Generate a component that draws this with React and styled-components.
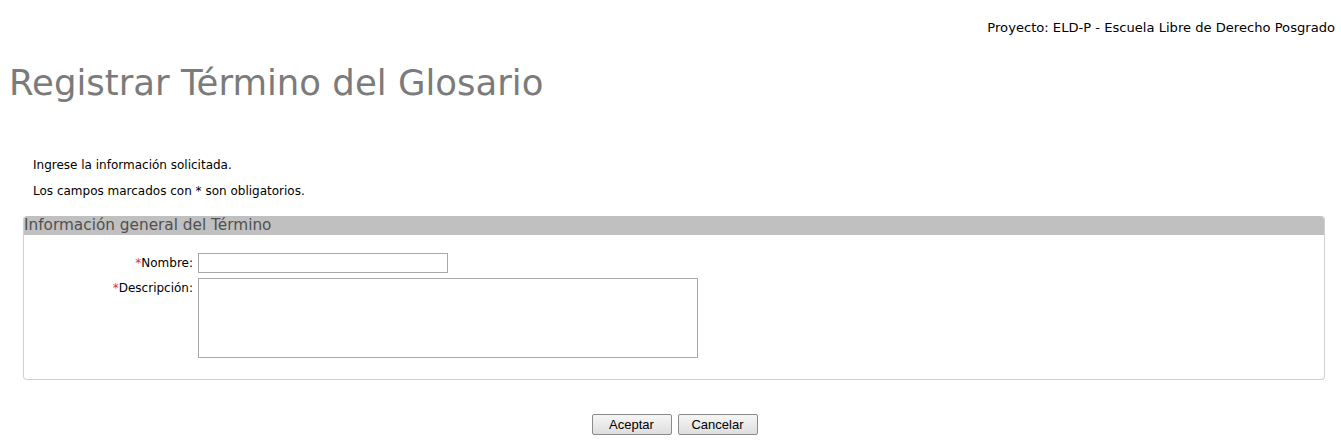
import styled, { createGlobalStyle } from "styled-components";

const GlobalStyle = createGlobalStyle`
  body {
    margin: 0;
    background: #fff;
    font-family: "DejaVu Sans", Verdana, sans-serif;
    color: #000;
  }
`;

const Page = styled.div`
  width: 1341px;
  min-height: 440px;
  box-sizing: border-box;
`;

const ProjectBar = styled.div`
  display: flex;
  justify-content: flex-end;
  padding: 19px 6px 0 0;
  font-size: 13.1px;
  line-height: 17px;
  height: 17px;
`;

const Title = styled.h1`
  margin: 27px 0 0 9px;
  font-weight: normal;
  font-size: 35.5px;
  line-height: 40px;
  color: #7b7b7b;
`;

const Intro = styled.div`
  padding: 49px 0 0 33px;
  font-size: 12px;
  line-height: 26px;
`;

const Panel = styled.section`
  margin: 12px 16px 0 23px;
  border: 1px solid #d0d0d0;
  border-top: none;
  border-radius: 4px;
  overflow: hidden;
  padding-bottom: 21px;
`;

const PanelHeader = styled.h2`
  margin: 0;
  background: #c0c0c0;
  color: #505050;
  font-weight: normal;
  font-size: 15.3px;
  line-height: 19px;
  height: 19px;
  padding-left: 0;
`;

const FieldGrid = styled.div`
  display: grid;
  grid-template-columns: 169px auto;
  column-gap: 5px;
  row-gap: 5px;
  padding-top: 18px;
  justify-content: start;
`;

const Label = styled.label`
  text-align: right;
  font-size: 12px;
  line-height: 16px;
  padding-top: ${(p) => p.$top || 0}px;
`;

const Required = styled.span`
  color: #e03030;
`;

const TextInput = styled.input`
  width: 250px;
  height: 20px;
  box-sizing: border-box;
  border: 1px solid #a9a9a9;
  margin: 0;
  padding: 1px 2px;
`;

const TextArea = styled.textarea`
  width: 500px;
  height: 80px;
  box-sizing: border-box;
  border: 1px solid #a9a9a9;
  margin: 0;
  resize: none;
  display: block;
`;

const Actions = styled.div`
  display: flex;
  justify-content: center;
  gap: 6px;
  padding: 34px 0 0 8px;
`;

const Button = styled.button`
  width: 80px;
  height: 21px;
  font-family: "Liberation Sans", Arial, sans-serif;
  font-size: 13px;
  padding: 0;
  border: 1px solid #8a8a8a;
  border-radius: 2px;
  background: linear-gradient(#f6f6f6, #dedede);
  color: #000;
`;

export default function App() {
  return (
    <Page>
      <GlobalStyle />
      <ProjectBar>Proyecto: ELD-P - Escuela Libre de Derecho Posgrado</ProjectBar>
      <Title>Registrar Término del Glosario</Title>
      <Intro>
        <div>Ingrese la información solicitada.</div>
        <div>Los campos marcados con * son obligatorios.</div>
      </Intro>
      <Panel>
        <PanelHeader>Información general del Término</PanelHeader>
        <FieldGrid>
          <Label $top={2}>
            <Required>*</Required>Nombre:
          </Label>
          <TextInput type="text" />
          <Label $top={2}>
            <Required>*</Required>Descripción:
          </Label>
          <TextArea />
        </FieldGrid>
      </Panel>
      <Actions>
        <Button>Aceptar</Button>
        <Button>Cancelar</Button>
      </Actions>
    </Page>
  );
}
